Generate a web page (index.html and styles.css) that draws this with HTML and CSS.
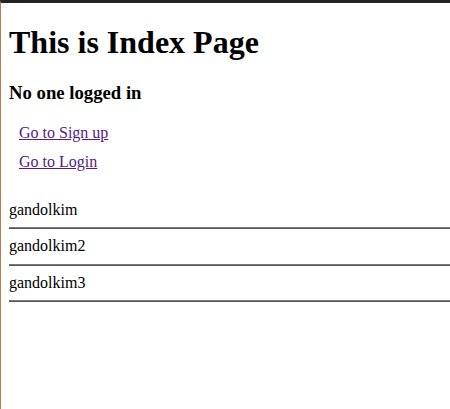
FILE: index.html
```html
<!DOCTYPE html>
<html>
<head>
<meta charset="utf-8">
<title>Index</title>
<link rel="stylesheet" href="styles.css">
</head>
<body>
<div class="frame">
  <h1 class="title">This is Index Page</h1>
  <h3 class="status">No one logged in</h3>
  <ul class="links">
    <li><a href="#">Go to Sign up</a></li>
    <li><a href="#">Go to Login</a></li>
  </ul>
  <div class="users">
    <div class="user">gandolkim</div>
    <hr class="sep">
    <div class="user">gandolkim2</div>
    <hr class="sep">
    <div class="user">gandolkim3</div>
    <hr class="sep">
  </div>
</div>
</body>
</html>
```
FILE: styles.css
```css
html, body {
  margin: 0;
  padding: 0;
  background: #fff;
}
body {
  font-family: "Liberation Serif", "Times New Roman", serif;
  font-size: 16px;
  color: #000;
  border-top: 3px solid #242424;
  border-left: 1px solid #b97b52;
  min-height: 406px;
}
.frame {
  padding: 0 0 0 8px;
}
.title {
  font-size: 32px;
  font-weight: bold;
  margin: 0;
  padding-top: 21px;
  margin-bottom: 21px;
  line-height: 37px;
}
.status {
  font-size: 18.72px;
  margin: 0 0 20px;
  line-height: 22px;
}
.links {
  list-style: none;
  margin: 0;
  padding: 0 0 0 10px;
}
.links li {
  line-height: 18px;
  margin-bottom: 11px;
}
.links a {
  color: #551a8b;
}
.users {
  margin-top: 29.5px;
}
.user {
  line-height: 18.5px;
  padding: 0;
}
.sep {
  margin: 8px 0;
  border: 0;
  border-top: 1px solid #7a7a7a;
  border-bottom: 1px solid #555;
  height: 0;
}
```
